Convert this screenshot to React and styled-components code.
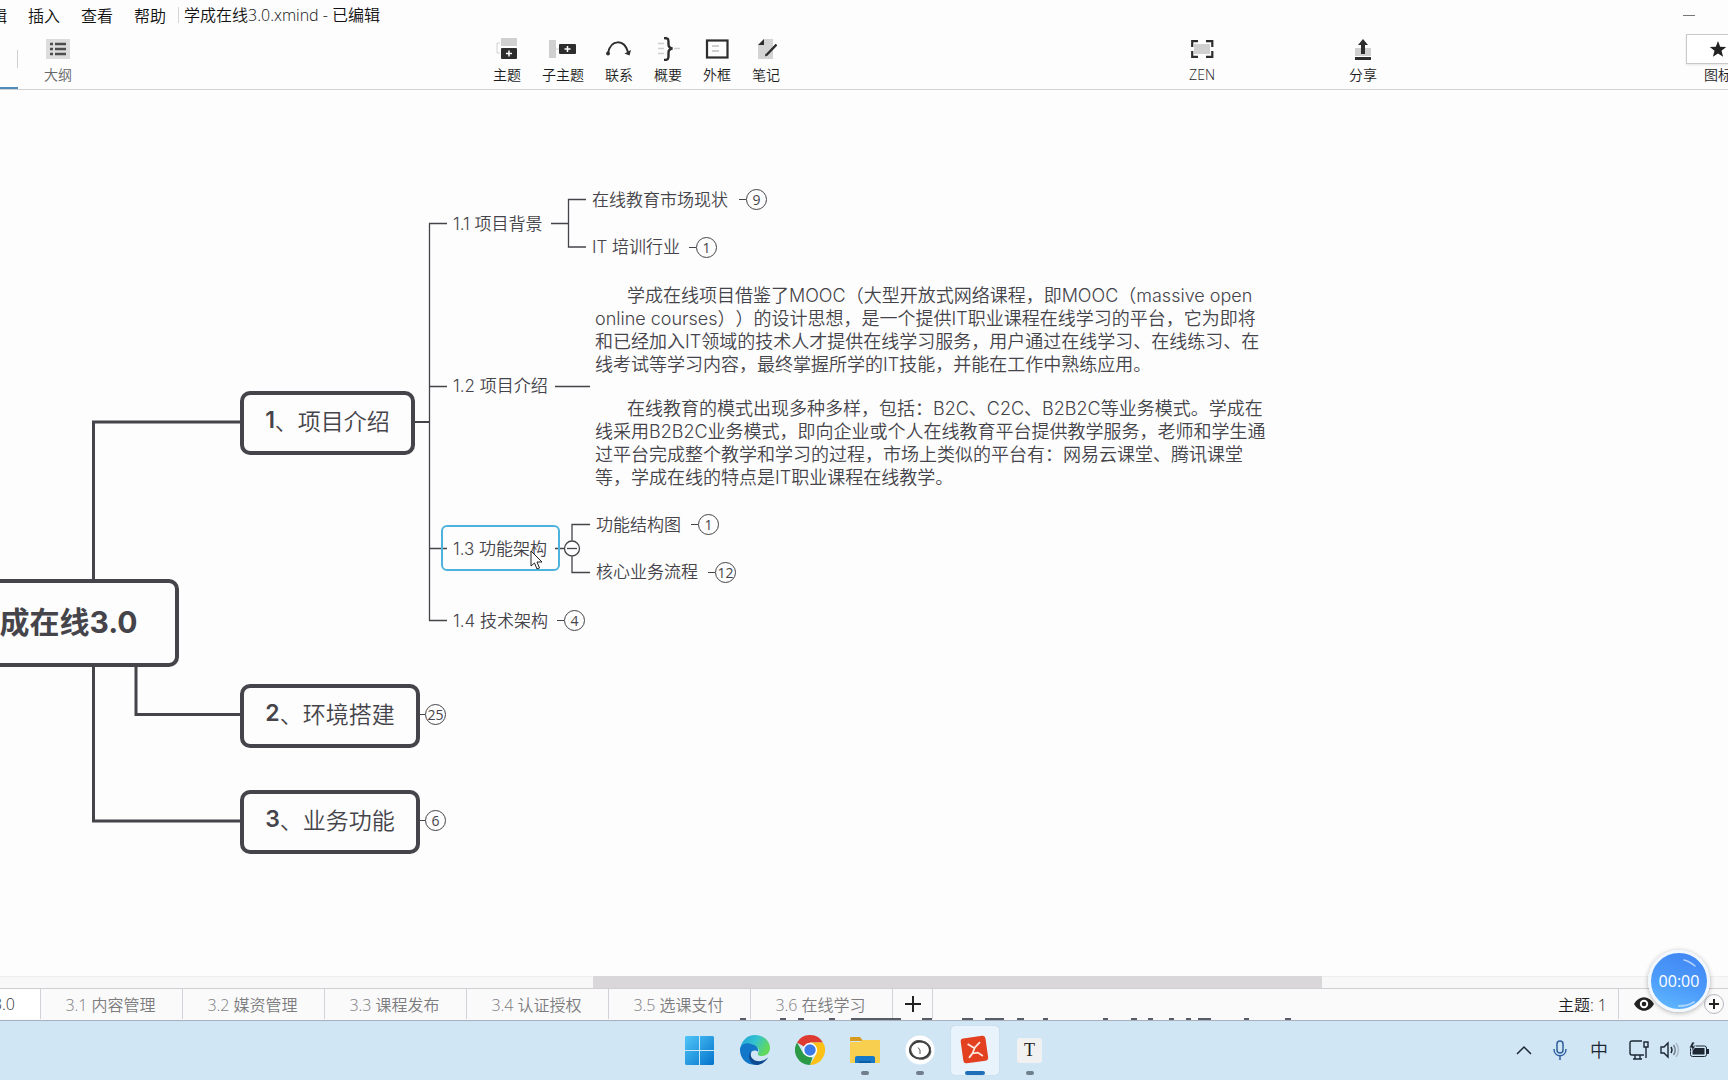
import React from 'react';
import styled, { createGlobalStyle, css } from 'styled-components';

const ink = '#45444a';
const ui = "'Open Sans', 'Noto Sans CJK SC', sans-serif";
const map = "Inter, 'Noto Sans CJK SC', sans-serif";

const GlobalStyle = createGlobalStyle`
  * {
    box-sizing: border-box;
  }
  body {
    margin: 0;
    background: #fdfdfd;
    font-family: ${ui};
    font-weight: 350;
    text-spacing-trim: space-all;
    overflow: hidden;
  }
  button {
    margin: 0;
    padding: 0;
    border: 0;
    background: none;
    font: inherit;
    color: inherit;
    white-space: nowrap;
  }
  svg {
    display: block;
    flex: none;
  }
`;

const Screen = styled.div`
  display: flex;
  flex-direction: column;
  width: 100%;
  height: 100vh;
  overflow: hidden;
`;

/* title bar */
const MenuBar = styled.header`
  display: flex;
  align-items: center;
  height: 30px;
  flex: none;
  font-size: 16px;
  color: #111;
`;
const MenuList = styled.nav`
  display: flex;
  gap: 21px;
  margin-left: -25px;
  padding-right: 12px;
`;
const Title = styled.h1`
  margin: 0;
  padding-left: 5px;
  border-left: 1px solid #d4d4d4;
  font-size: 16px;
  font-weight: inherit;
  line-height: 16px;
  white-space: nowrap;
`;
const Minimize = styled.button`
  width: 12px;
  height: 1px;
  margin: 0 33px 0 auto;
  background: #777;
`;

/* toolbar */
const Toolbar = styled.div`
  display: flex;
  height: 60px;
  flex: none;
  border-bottom: 1px solid #d2d2d4;
  overflow: hidden;
`;
const ActiveView = styled.button`
  width: 18px;
  height: 59px;
  border-bottom: 2px solid #4f8ab8;
  background: linear-gradient(#cfcfcf, #cfcfcf) right 20px / 1px 18px no-repeat;
`;
const ToolGroup = styled.div`
  display: flex;
  gap: 21px;
  margin-left: ${({ $before }) => $before};
`;
const ToolButton = styled.button`
  display: flex;
  flex-direction: column;
  align-items: center;
  padding-top: 8px;
  font-size: 14px;
  line-height: 18px;
  color: ${({ $muted }) => ($muted ? '#666' : '#1c1c1c')};
`;
const ToolIcon = styled.span`
  display: flex;
  align-items: center;
  justify-content: center;
  height: 22px;
  margin-bottom: 6px;
`;
const MarkerButton = styled(ToolButton)`
  width: 64px;
  margin: 0 -22px 0 auto;
  padding-top: 4px;
`;
const MarkerFrame = styled.span`
  display: flex;
  align-items: center;
  justify-content: center;
  width: 100%;
  height: 30px;
  margin-bottom: 2px;
  border: 1px solid #c9c9cb;
  box-shadow: 0 1px 2px rgba(0, 0, 0, 0.1);
  background: #fff;
`;

/* canvas */
const Canvas = styled.main`
  position: relative;
  flex: 1;
  min-height: 0;
  overflow: hidden;
  font-family: ${map};
  color: ${ink};
`;
const Lines = styled.svg`
  position: absolute;
  left: 0;
  top: 0;
  fill: none;
  stroke: ${ink};
`;
const Node = styled.div`
  position: absolute;
  left: ${({ $x }) => $x}px;
  top: ${({ $y }) => $y}px;
  white-space: nowrap;
`;
const BoxNode = styled(Node)`
  display: flex;
  align-items: center;
  justify-content: center;
  width: ${({ $w }) => $w}px;
  height: 64px;
  padding-bottom: 6px;
  border: 4px solid ${ink};
  border-radius: 10px;
  font-size: 23px;

  b {
    font-weight: 600;
  }

  ${({ $root }) =>
    $root &&
    css`
      height: 88px;
      font-size: 30px;
      font-weight: 700;
    `}
`;
const Topic = styled(Node)`
  height: 26px;
  font-size: 17px;
  line-height: 26px;
`;
const Selection = styled(Node)`
  width: 119px;
  height: 46px;
  border: 2px solid #4db3dc;
  border-radius: 6px;
`;
const Note = styled(Node)`
  font-size: 18px;
  line-height: 23px;

  p {
    margin: 0 0 21px;
    text-indent: 32px;
  }
`;
const Badge = styled.button`
  position: absolute;
  left: ${({ $x }) => $x}px;
  top: ${({ $y }) => $y}px;
  width: 21px;
  height: 21px;
  border: 1px solid ${ink};
  border-radius: 50%;
  font-family: ${ui};
  font-size: 14px;
  font-weight: 400;
  line-height: 19px;

  &::before {
    content: '';
    position: absolute;
    right: 20px;
    top: 9px;
    width: ${({ $stub }) => $stub || 7}px;
    height: 1px;
    background: ${ink};
  }
`;
const Count = styled.span`
  display: flex;
  justify-content: center;
`;
const Cursor = styled.svg`
  position: absolute;
  left: 530px;
  top: 460px;
`;

const ScrollTrack = styled.div`
  display: flex;
  height: 12px;
  flex: none;
  background: #f8f8f9;
  border-top: 1px solid #eeeeef;
`;
const ScrollThumb = styled.div`
  width: 42.2%;
  margin: -1px 0 0 34.3%;
  background: #d9d7da;
`;

/* sheet tabs */
const SheetBar = styled.div`
  position: relative;
  display: flex;
  align-items: stretch;
  height: 33px;
  flex: none;
  padding-bottom: 1px;
  border-top: 1px solid #cfced3;
  border-bottom: 1px solid #a9afbd;
  background: #fafafb;
  font-size: 16px;
`;
const Sheet = styled.button`
  width: 142px;
  padding-right: 2px;
  border-right: 1px solid #d3d2d8;
  color: #7c7c7e;

  ${({ $active }) =>
    $active &&
    css`
      width: 41px;
      background: #fff;
      color: #333;
      direction: rtl;
      padding-right: 25px;
      overflow: hidden;
    `}
`;
const AddSheet = styled.button`
  display: flex;
  align-items: center;
  justify-content: center;
  width: 40px;
  border-right: 1px solid #d3d2d8;
`;
const Status = styled.div`
  display: flex;
  align-items: center;
  margin-left: auto;
  color: #1c1c1c;
`;
const TopicCount = styled.span`
  display: flex;
  align-items: center;
  height: 100%;
  padding-right: 11px;
  margin-right: 15px;
  border-right: 1px solid #d3d2d8;
`;
const ZoomIn = styled.button`
  display: flex;
  align-items: center;
  justify-content: center;
  width: 20px;
  height: 20px;
  margin: 0 4px 0 50px;
  border: 1px solid #b9b7c0;
  border-radius: 50%;
`;
const Subtitles = styled.svg`
  position: absolute;
  left: 0;
  bottom: 0;
`;
const Timer = styled.div`
  position: absolute;
  right: 18px;
  bottom: 8px;
  display: flex;
  align-items: center;
  justify-content: center;
  width: 62px;
  height: 62px;
  border: 3px solid #f2f8ff;
  border-radius: 50%;
  background: linear-gradient(200deg, #3f83f2, #4c9bfa 55%, #62bbff);
  box-shadow: 0 1px 5px rgba(0, 0, 0, 0.3);
  font-size: 16px;
  font-weight: 400;
  color: #fff;
`;
const Shine = styled.svg`
  position: absolute;
  inset: 0;
`;

/* taskbar */
const Taskbar = styled.footer`
  display: grid;
  grid-template-columns: 1fr auto 1fr;
  height: 59px;
  flex: none;
  padding: 0 0 1px 1px;
  background: #d1e6f4;
`;
const Apps = styled.div`
  grid-column: 2;
  display: flex;
  align-items: center;
  gap: 7px;
`;
const AppButton = styled.button`
  position: relative;
  display: flex;
  align-items: center;
  justify-content: center;
  width: 48px;
  height: 49px;
  border-radius: 4px;

  ${({ $running }) =>
    $running &&
    css`
      &::after {
        content: '';
        position: absolute;
        left: 20px;
        bottom: 0;
        width: 8px;
        height: 4px;
        border-radius: 2px;
        background: #6f7f8c;
      }
    `}
  ${({ $focused }) =>
    $focused &&
    css`
      background: #e9f3fb;
      box-shadow: 0 0 1px #9fb4c4;

      &::after {
        left: 14px;
        width: 20px;
        background: #1f6fb8;
      }
    `}
`;
const Tray = styled.div`
  display: flex;
  align-items: center;
  justify-content: flex-end;
  padding-right: 11px;
  color: #1c2733;
`;
const TrayButton = styled.button`
  display: flex;
  justify-content: center;
  width: ${({ $w }) => $w}px;
  font-size: 18px;
  line-height: 24px;
`;

const icons = {
  outline: (
    <svg width="24" height="20">
      <rect width="24" height="20" fill="#dcdcdc" />
      <path d="M4 5h3M4 10h3M4 15h3M9 5h11M9 10h11M9 15h11" stroke="#4c4c4c" strokeWidth="2.4" />
    </svg>
  ),
  topic: (
    <svg width="22" height="22">
      <path d="M4 5H1v10h3" fill="none" stroke="#d0d0d0" />
      <rect x="5" y="0" width="16" height="8" fill="#d0d0d0" />
      <rect x="5" y="10" width="16" height="11" rx="1" fill="#2d2d2d" />
      <path d="M10 15.500h6M13 12.500v6" stroke="#fff" strokeWidth="1.500" />
    </svg>
  ),
  subtopic: (
    <svg width="28" height="22">
      <rect x="0" y="2" width="7" height="18" fill="#d0d0d0" />
      <path d="M7 11h4" stroke="#d0d0d0" />
      <rect x="10" y="6" width="17" height="10" rx="1" fill="#2d2d2d" />
      <path d="M15.500 11h6M18.500 8v6" stroke="#fff" strokeWidth="1.500" />
    </svg>
  ),
  relation: (
    <svg width="26" height="22" fill="none" stroke="#2d2d2d" strokeWidth="2">
      <path d="M2 15C5 1 18 1 22 14" />
      <circle cx="2" cy="15.500" r="1.900" fill="#2d2d2d" stroke="none" />
      <path d="M25 12l-1.500 5.500-5-2z" fill="#2d2d2d" stroke="none" />
    </svg>
  ),
  summary: (
    <svg width="24" height="24" fill="none">
      <path d="M2 6.500h6M2 11.500h6M2 16.500h6M18 11.500h6" stroke="#cfcfcf" strokeWidth="1.500" />
      <path
        d="M8 1c4 0 4.500 1 4.500 4v2.500c0 2.500 1 3.500 4 4-3 .5-4 1.500-4 4V19c0 3-.5 4-4.500 4"
        stroke="#2d2d2d"
        strokeWidth="2.400"
      />
    </svg>
  ),
  boundary: (
    <svg width="24" height="20" fill="none">
      <rect x="2" y="1.500" width="20.500" height="17" stroke="#2d2d2d" strokeWidth="2.200" />
      <path d="M7 7h7M7 12h7" stroke="#cfcfcf" strokeWidth="1.800" />
    </svg>
  ),
  note: (
    <svg width="22" height="22">
      <path d="M9 1h9v20H3V7z" fill="#d4d4d4" />
      <path d="M9 1v6H3z" fill="#2d2d2d" />
      <path d="M21.500 6.500 11.500 17" stroke="#2d2d2d" strokeWidth="2.400" />
      <path d="m10 18.500.5-3 2 2z" fill="#2d2d2d" />
    </svg>
  ),
  zen: (
    <svg width="24" height="18" fill="none">
      <rect x="4" y="4" width="16" height="10" fill="#d0d0d0" />
      <path
        d="M8 1.200H2.200V7M16 1.200h6.300V7M8 16.800H2.200V11M16 16.800h6.300V11"
        stroke="#2d2d2d"
        strokeWidth="2.200"
      />
    </svg>
  ),
  share: (
    <svg width="16" height="22">
      <rect x="0" y="10" width="16" height="8" fill="#d0d0d0" />
      <path d="M8 1 3 7h3v9h4V7h3z" fill="#2d2d2d" />
      <rect x="0" y="19" width="16" height="3" fill="#2d2d2d" />
    </svg>
  ),
};

const tools = [
  ['topic', '主题'],
  ['subtopic', '子主题'],
  ['relation', '联系'],
  ['summary', '概要'],
  ['boundary', '外框'],
  ['note', '笔记'],
];

const sheets = ['3.1 内容管理', '3.2 媒资管理', '3.3 课程发布', '3.4 认证授权', '3.5 选课支付', '3.6 在线学习'];

const topics = [
  { x: 453, y: 121, text: '1.1 项目背景' },
  { x: 592, y: 97, text: '在线教育市场现状' },
  { x: 592, y: 144, text: 'IT 培训行业' },
  { x: 453, y: 283, text: '1.2 项目介绍' },
  { x: 453, y: 446, text: '1.3 功能架构' },
  { x: 596, y: 422, text: '功能结构图' },
  { x: 596, y: 469, text: '核心业务流程' },
  { x: 453, y: 518, text: '1.4 技术架构' },
];

const badges = [
  { x: 746, y: 99, n: 9 },
  { x: 696, y: 147, n: 1 },
  { x: 698, y: 424, n: 1 },
  { x: 715, y: 472, n: 12 },
  { x: 564, y: 520, n: 4 },
  { x: 425, y: 614, n: 25, stub: 5 },
  { x: 425, y: 720, n: 6, stub: 5 },
];

const Tool = ({ icon, label, muted }) => (
  <ToolButton $muted={muted}>
    <ToolIcon>{icons[icon]}</ToolIcon>
    {label}
  </ToolButton>
);

const MindMap = () => (
  <Canvas>
    <Lines width="1200" height="880">
      <path
        d="M93.500 490V332H242M93.500 575V731H242M136 575v49.500H242"
        strokeWidth="3"
      />
      <path d="M414 332h15" strokeWidth="2" />
      <path
        d="M447 133.500h-17.500V530.500H447M429.500 296.500H447M429.500 458.500H447M551 133.500h17.500M586 109.500h-17.500v47.500H586M555 296.500h35M555 458.500h9M590 434.500h-18v16M572 466.500v16h18"
        strokeWidth="1.300"
      />
      <circle cx="572" cy="458.500" r="7.500" strokeWidth="1.300" />
      <path d="M567 458.500h10" strokeWidth="1.300" />
    </Lines>
    <BoxNode $root $x={-72} $y={489} $w={251}>
      学成在线3.0
    </BoxNode>
    <BoxNode $x={240} $y={301} $w={175}>
      <b>1</b>、项目介绍
    </BoxNode>
    <BoxNode $x={240} $y={594} $w={180}>
      <b>2</b>、环境搭建
    </BoxNode>
    <BoxNode $x={240} $y={700} $w={180}>
      <b>3</b>、业务功能
    </BoxNode>
    {topics.map(({ x, y, text }) => (
      <Topic key={text} $x={x} $y={y}>
        {text}
      </Topic>
    ))}
    <Note $x={595} $y={194}>
      <p>
        学成在线项目借鉴了MOOC（大型开放式网络课程，即MOOC（massive open
        <br />
        online courses））的设计思想，是一个提供IT职业课程在线学习的平台，它为即将
        <br />
        和已经加入IT领域的技术人才提供在线学习服务，用户通过在线学习、在线练习、在
        <br />
        线考试等学习内容，最终掌握所学的IT技能，并能在工作中熟练应用。
      </p>
      <p>
        在线教育的模式出现多种多样，包括：B2C、C2C、B2B2C等业务模式。学成在
        <br />
        线采用B2B2C业务模式，即向企业或个人在线教育平台提供教学服务，老师和学生通
        <br />
        过平台完成整个教学和学习的过程，市场上类似的平台有：网易云课堂、腾讯课堂
        <br />
        等，学成在线的特点是IT职业课程在线教学。
      </p>
    </Note>
    <Selection $x={441} $y={435} />
    {badges.map(({ x, y, n, stub }) => (
      <Badge key={`${x}-${y}`} $x={x} $y={y} $stub={stub}>
        <Count>{n}</Count>
      </Badge>
    ))}
    <Cursor width="14" height="20">
      <path d="M1 1v15l3.500-3 2.500 6 2.500-1-2.500-6H12z" fill="#fff" stroke="#222" />
    </Cursor>
  </Canvas>
);

const WindowsLogo = () => (
  <svg width="29" height="29">
    <defs>
      <linearGradient id="win" x1="0" y1="0" x2="1" y2="1">
        <stop offset="0" stopColor="#4fc6f7" />
        <stop offset="1" stopColor="#0473cc" />
      </linearGradient>
    </defs>
    <path d="M1 0h13v14H0V1zM15 0h13l1 1v13H15zM0 15h14v14H1l-1-1zM15 15h14v13l-1 1H15z" fill="url(#win)" />
  </svg>
);

const EdgeLogo = () => (
  <svg width="30" height="30" viewBox="0 0 30 30">
    <defs>
      <linearGradient id="edgeTop" x1="0" y1="0" x2="1" y2="0.400">
        <stop offset="0" stopColor="#1f9fdc" />
        <stop offset="0.550" stopColor="#35c3cf" />
        <stop offset="1" stopColor="#62d95a" />
      </linearGradient>
    </defs>
    <path d="M0 15C1 6 7 0 15 0c9 0 15 6 15 13 0 5-4 8-8 8-3 0-5-1-4-3 2-3 0-6-4-7-5-1-11 0-14 4z" fill="url(#edgeTop)" />
    <path d="M0 15c0-5 6-8 11-6 5 1 8 4 7 8-2-2-6-2-7 1-2 5 2 10 7 11-10 3-18-5-18-14z" fill="#1277c9" />
    <path d="M11 16c-2 6 3 11 10 10 3-.5 5-2 7-3.500-2 4-7 7.500-12 7.500C9 29 7 20 11 16z" fill="#0e4a91" />
  </svg>
);

const ChromeLogo = () => (
  <svg width="30" height="30" viewBox="0 0 30 30">
    <path d="M15 15 2 7.500A15 15 0 0 1 28 7.500H15z" fill="#dd3b32" />
    <path d="M15 15V7.500h13A15 15 0 0 1 15 30l6.500-11.200z" fill="#fbc116" />
    <path d="M2 7.500 8.500 18.700 15 22l2.500.5L15 30A15 15 0 0 1 2 7.500z" fill="#2a9a47" />
    <circle cx="15" cy="15" r="7.200" fill="#fff" />
    <circle cx="15" cy="15" r="5.700" fill="#3b7be8" />
  </svg>
);

const FolderLogo = () => (
  <svg width="30" height="28">
    <path d="M0 2a1 1 0 0 1 1-1h9l3 4H0z" fill="#d79a1c" />
    <path d="M0 6h10l3-2h17v22a1 1 0 0 1-1 1H1a1 1 0 0 1-1-1z" fill="#f9cf4f" />
    <path d="M5 27v-5q0-2 2-2h16q2 0 2 2v5z" fill="#1778c7" />
    <path d="M9 27v-2h12v2z" fill="#0d5da5" />
  </svg>
);

const ClockLogo = () => (
  <svg width="30" height="30" fill="none">
    <circle cx="15" cy="15" r="14.500" fill="#fff" />
    <ellipse cx="15" cy="15" rx="10" ry="8.500" stroke="#333" strokeWidth="2" />
    <ellipse cx="15.500" cy="14.500" rx="10.500" ry="9" stroke="#555" transform="rotate(30 15 15)" />
    <path d="M13 12.500l2 2.500v4" stroke="#555" />
  </svg>
);

const XmindLogo = () => (
  <svg width="30" height="30">
    <g transform="rotate(-8 15 15)">
      <rect x="2" y="2" width="25" height="25" rx="3" fill="#e2401f" />
      <path
        d="M8.500 8l6 5L21 8M8 22l4-4h5.500L22 22M12 18l3-5"
        stroke="#ffe6dc"
        strokeWidth="1.800"
        fill="none"
      />
    </g>
  </svg>
);

const TypeTile = styled.span`
  width: 25px;
  height: 25px;
  border-radius: 3px;
  background: #f1f1f1;
  font: 18px/25px 'Liberation Serif', serif;
  color: #222;
  text-align: center;
`;

const App = () => (
  <>
    <GlobalStyle />
    <Screen>
      <MenuBar>
        <MenuList>
          {['编辑', '插入', '查看', '帮助'].map((item) => (
            <button key={item}>{item}</button>
          ))}
        </MenuList>
        <Title>学成在线3.0.xmind - 已编辑</Title>
        <Minimize aria-label="最小化" />
      </MenuBar>
      <Toolbar>
        <ActiveView aria-label="思维导图" />
        <ToolGroup $before="26px">
          <Tool icon="outline" label="大纲" muted />
        </ToolGroup>
        <ToolGroup $before="421px">
          {tools.map(([icon, label]) => (
            <Tool key={icon} icon={icon} label={label} />
          ))}
        </ToolGroup>
        <ToolGroup $before="auto">
          <Tool icon="zen" label="ZEN" />
        </ToolGroup>
        <ToolGroup $before="134px">
          <Tool icon="share" label="分享" />
        </ToolGroup>
        <ToolGroup $before="309px">
          <MarkerButton>
            <MarkerFrame>
              <svg width="18" height="18" viewBox="0 0 18 18">
                <path d="M9 1l2.200 5.700 6 .3-4.700 3.800 1.600 6L9 13.500l-5.100 3.300 1.600-6L.8 7l6-.3z" fill="#222" />
              </svg>
            </MarkerFrame>
            图标
          </MarkerButton>
        </ToolGroup>
      </Toolbar>
      <MindMap />
      <ScrollTrack>
        <ScrollThumb />
      </ScrollTrack>
      <SheetBar>
        <Sheet $active>3.0</Sheet>
        {sheets.map((name) => (
          <Sheet key={name}>{name}</Sheet>
        ))}
        <AddSheet aria-label="新建画布">
          <svg width="16" height="16">
            <path d="M0 8h16M8 0v16" stroke="#222" strokeWidth="2" />
          </svg>
        </AddSheet>
        <Status>
          <TopicCount>主题: 1</TopicCount>
          <svg width="20" height="14">
            <path d="M0 7C5-2 15-2 20 7 15 16 5 16 0 7z" fill="#222" />
            <circle cx="10" cy="7" r="4.200" fill="#fff" />
            <circle cx="10" cy="7" r="2.300" fill="#222" />
          </svg>
          <ZoomIn aria-label="放大">
            <svg width="10" height="10">
              <path d="M0 5h10M5 0v10" stroke="#222" strokeWidth="2" />
            </svg>
          </ZoomIn>
        </Status>
        <Subtitles width="1300" height="2">
          <path
            d="M740 1h6M780 1h6M798 1h6M829 1h6M851 1h50M922 1h10M962 1h11M985 1h19M1017 1h7M1043 1h5M1103 1h5M1131 1h6M1148 1h5M1169 1h5M1186 1h5M1198 1h13M1244 1h5M1285 1h6"
            stroke="#222a36"
            strokeWidth="1.500"
          />
        </Subtitles>
        <Timer>
          <Shine width="56" height="56" fill="none" stroke="#fff" strokeLinecap="round">
            <path d="M33 7q5 1 11 6" strokeOpacity="0.600" strokeWidth="1.500" />
            <path d="M28 53q9 0 15-4" strokeOpacity="0.500" strokeWidth="2" />
          </Shine>
          00:00
        </Timer>
      </SheetBar>
      <Taskbar>
        <Apps>
          <AppButton aria-label="开始">
            <WindowsLogo />
          </AppButton>
          <AppButton aria-label="Edge">
            <EdgeLogo />
          </AppButton>
          <AppButton aria-label="Chrome">
            <ChromeLogo />
          </AppButton>
          <AppButton aria-label="文件资源管理器" $running>
            <FolderLogo />
          </AppButton>
          <AppButton aria-label="时钟" $running>
            <ClockLogo />
          </AppButton>
          <AppButton aria-label="XMind" $running $focused>
            <XmindLogo />
          </AppButton>
          <AppButton aria-label="Typora" $running>
            <TypeTile>T</TypeTile>
          </AppButton>
        </Apps>
        <Tray>
          <TrayButton $w={34} aria-label="更多">
            <svg width="16" height="10" fill="none" stroke="#1c2733" strokeWidth="1.500">
              <path d="M1 9l7-7 7 7" />
            </svg>
          </TrayButton>
          <TrayButton $w={38} aria-label="麦克风">
            <svg width="14" height="20" fill="none" stroke="#2d5f9e" strokeWidth="1.500">
              <rect x="4" y="1" width="6" height="12" rx="3" />
              <path d="M1 9c0 9 12 9 12 0M7 16v4" />
            </svg>
          </TrayButton>
          <TrayButton $w={40}>中</TrayButton>
          <TrayButton $w={40} aria-label="网络">
            <svg width="20" height="20" fill="none" stroke="#1c2733" strokeWidth="1.400">
              <path d="M13 1H3Q1 1 1 3v10q0 2 2 2h12M6 15v4M11 15v4M4 19h9" />
              <path d="M15 2h4v5h-4zM17 7v11" />
            </svg>
          </TrayButton>
          <TrayButton $w={22} aria-label="音量">
            <svg width="20" height="18" fill="none" stroke="#1c2733" strokeWidth="1.400">
              <path d="M1 6h3l4-4v14l-4-4H1z" />
              <path d="M11 6q2 3 0 6" />
              <path d="M13.500 4q3.500 5 0 10" stroke="#6d7d89" />
              <path d="M16 2q5 7 0 14" stroke="#a9bac6" />
            </svg>
          </TrayButton>
          <TrayButton $w={36} aria-label="电池">
            <svg width="20" height="16">
              <rect x="1.500" y="4" width="16" height="10.500" rx="2" fill="none" stroke="#1c2733" />
              <rect x="3.500" y="6" width="12" height="6.500" fill="#1c2733" />
              <rect x="18" y="7" width="2" height="5" fill="#1c2733" />
              <path d="M3 0 0 6h3l-1 4 5-6H4l2-4z" fill="#1c2733" stroke="#d1e6f4" strokeWidth="0.800" />
            </svg>
          </TrayButton>
        </Tray>
      </Taskbar>
    </Screen>
  </>
);

export default App;
